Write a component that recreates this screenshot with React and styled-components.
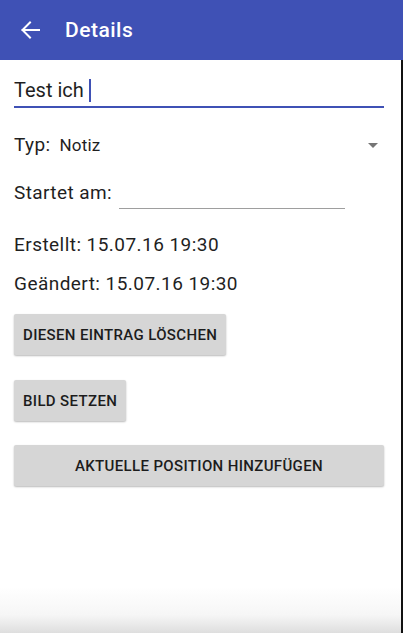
import React from "react";
import styled, { createGlobalStyle } from "styled-components";

const Global = createGlobalStyle`
  html, body { margin: 0; padding: 0; background: #fff; }
  body { font-family: Roboto, "Noto Sans", Arial, sans-serif; }
  * { box-sizing: border-box; }
`;

const Screen = styled.div`
  width: 403px;
  height: 633px;
  display: flex;
  flex-direction: column;
  background: #fff;
  overflow: hidden;
`;

const AppBar = styled.header`
  height: 60px;
  flex: 0 0 60px;
  background: #3f51b5;
  display: flex;
  align-items: center;
  padding-left: 18px;
  gap: 23px;
`;

const BackIcon = styled.svg`
  width: 24px;
  height: 24px;
  display: block;
`;

const Title = styled.h1`
  margin: 0;
  color: #fff;
  font-size: 21px;
  font-weight: 500;
  letter-spacing: 0.5px;
  line-height: 24px;
`;

const Body = styled.main`
  flex: 1;
  display: flex;
  flex-direction: column;
  padding: 17px 17px 0 14px;
  border-right: 2px solid #111;
  background: linear-gradient(to bottom, #fff 0, #fff 527px, #f6f6f6 555px, #dedede 573px);
`;

const TitleField = styled.div`
  display: flex;
  align-items: center;
  height: 31px;
  padding-bottom: 3px;
  border-bottom: 2px solid #3f51b5;
  font-size: 20px;
  line-height: 28px;
  color: #1f1f1f;
`;

const Caret = styled.span`
  display: inline-block;
  width: 2px;
  height: 23px;
  background: #3f51b5;
  margin-left: 5px;
`;

const Row = styled.div`
  display: flex;
  align-items: ${(p) => p.$align || "center"};
  margin-top: ${(p) => p.$mt}px;
  font-size: 19px;
  line-height: 24px;
  letter-spacing: 0.4px;
  color: #1f1f1f;
`;

const Label = styled.span`
  padding-bottom: ${(p) => p.$pb || 0}px;
`;

const Value = styled.span`
  font-size: 17px;
  letter-spacing: 0.2px;
  margin-left: 9px;
  flex: 1;
`;

const Triangle = styled.span`
  width: 0;
  height: 0;
  border-left: 5px solid transparent;
  border-right: 5px solid transparent;
  border-top: 5px solid #757575;
  margin-right: 6px;
`;

const DateLine = styled.span`
  display: block;
  width: 226px;
  height: 28px;
  margin-left: 7px;
  border-bottom: 1px solid #9e9e9e;
`;

const Info = styled.div`
  margin-top: ${(p) => p.$mt}px;
  font-size: 19px;
  line-height: 24px;
  letter-spacing: 0.45px;
  color: #1f1f1f;
`;

const Button = styled.button`
  align-self: ${(p) => (p.$full ? "stretch" : "flex-start")};
  margin-top: ${(p) => p.$mt}px;
  height: 41px;
  padding: 0 9px;
  border: none;
  border-radius: 2px;
  background: #d6d6d6;
  box-shadow: 0 1px 2px rgba(0, 0, 0, 0.28);
  font-family: Roboto, "Noto Sans", Arial, sans-serif;
  font-size: 15px;
  font-weight: 500;
  letter-spacing: 0.35px;
  color: #1c1c1c;
  text-transform: uppercase;
`;

export default function App() {
  return (
    <>
      <Global />
      <Screen>
        <AppBar>
          <BackIcon viewBox="0 0 24 24" fill="none" stroke="#fff" strokeWidth="2" strokeLinecap="square">
            <path d="M21 12H4.5M12 4.5L4.5 12L12 19.5" />
          </BackIcon>
          <Title>Details</Title>
        </AppBar>
        <Body>
          <TitleField>
            Test ich<Caret />
          </TitleField>
          <Row $mt={25}>
            <Label>Typ:</Label>
            <Value>Notiz</Value>
            <Triangle />
          </Row>
          <Row $mt={24} $align="flex-end">
            <Label $pb={4}>Startet am:</Label>
            <DateLine />
          </Row>
          <Info $mt={24}>Erstellt: 15.07.16 19:30</Info>
          <Info $mt={15}>Geändert: 15.07.16 19:30</Info>
          <Button $mt={18}>Diesen Eintrag löschen</Button>
          <Button $mt={25}>Bild setzen</Button>
          <Button $mt={24} $full>Aktuelle Position hinzufügen</Button>
        </Body>
      </Screen>
    </>
  );
}
